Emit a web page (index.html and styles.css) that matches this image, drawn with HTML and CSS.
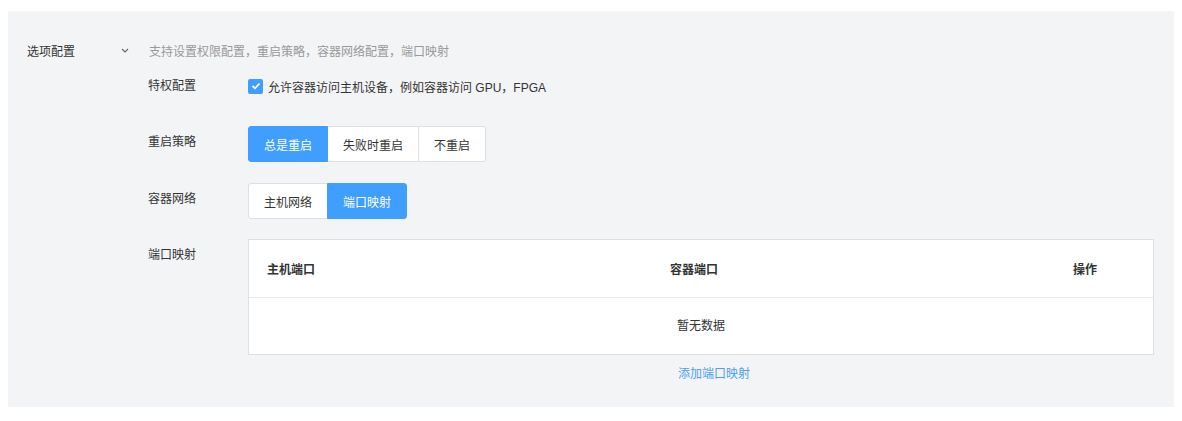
FILE: index.html
```html
<!DOCTYPE html>
<html lang="zh-CN">

    <head>
        <meta charset="UTF-8">
        <meta name="viewport" content="width=device-width, initial-scale=1.0">
        <title>选项配置</title>
        <link rel="stylesheet" href="styles.css">
    </head>

    <body>
        <div class="panel">
            <!-- 标题行 -->
            <div class="section-head">
                <span class="section-title">选项配置</span>
                <svg class="chevron" width="8" height="5" viewBox="0 0 8 5">
                    <path d="M1 1 L4 4 L7 1" fill="none" stroke="#666" stroke-width="1.1"></path>
                </svg>
                <span class="section-desc">支持设置权限配置，重启策略，容器网络配置，端口映射</span>
            </div>

            <div class="rows">
                <div class="row row-privilege">
                    <div class="row-label">特权配置</div>
                    <label class="check">
                        <span class="check-box">
                            <svg width="10" height="8" viewBox="0 0 10 8">
                                <path d="M1.5 4 L4 6.3 L8.5 1.5" fill="none" stroke="#fff" stroke-width="1.8"></path>
                            </svg>
                        </span>
                        <span>允许容器访问主机设备，例如容器访问 GPU，FPGA</span>
                    </label>
                </div>

                <div class="row">
                    <div class="row-label">重启策略</div>
                    <div class="btn-group">
                        <button class="btn active">总是重启</button>
                        <button class="btn">失败时重启</button>
                        <button class="btn">不重启</button>
                    </div>
                </div>

                <div class="row">
                    <div class="row-label">容器网络</div>
                    <div class="btn-group">
                        <button class="btn">主机网络</button>
                        <button class="btn active">端口映射</button>
                    </div>
                </div>

                <div class="row row-ports">
                    <div class="row-label">端口映射</div>
                    <div class="port-box">
                        <div class="port-table">
                            <div class="port-head">
                                <div class="cell">主机端口</div>
                                <div class="cell">容器端口</div>
                                <div class="cell">操作</div>
                            </div>
                            <div class="port-empty">暂无数据</div>
                        </div>
                        <div class="add-link"><a href="#">添加端口映射</a></div>
                    </div>
                </div>
            </div>
        </div>
    </body>

</html>
```

FILE: styles.css
```css
body {
    margin: 11px 8px 0 8px;
    font-family: "Liberation Sans", "Noto Sans CJK SC", sans-serif;
    font-size: 12px;
    color: #333;
    background: #fff;
}

.panel {
    background: #f3f4f6;
    height: 396px;
    padding: 29px 20px 0 19px;
    box-sizing: border-box;
}

.section-head {
    display: flex;
    align-items: center;
    height: 20px;
}

.section-title {
    width: 94px;
    color: #333;
}

.chevron {
    margin-right: 20px;
}

.section-desc {
    color: #999;
}

.rows {
    display: flex;
    flex-direction: column;
    gap: 21px;
    margin-top: 10px;
    padding-left: 121px;
}

.row {
    display: flex;
    align-items: flex-start;
}

.row-privilege {
    margin-bottom: 3px;
}

.row-ports {
    margin-top: -1px;
}

.row-label {
    width: 100px;
    line-height: 32px;
    flex-shrink: 0;
}

.check {
    display: flex;
    align-items: center;
    height: 32px;
    gap: 5px;
    cursor: pointer;
}

.check-box {
    width: 15px;
    height: 15px;
    border-radius: 2px;
    background: #409eff;
    display: flex;
    align-items: center;
    justify-content: center;
}

.btn-group {
    display: flex;
}

.btn {
    height: 36px;
    padding: 0 15px;
    font-family: inherit;
    font-size: 12px;
    color: #333;
    background: #fff;
    border: 1px solid #dcdfe6;
    margin-left: -1px;
    cursor: pointer;
}

.btn:first-child {
    margin-left: 0;
    border-radius: 3px 0 0 3px;
}

.btn:last-child {
    border-radius: 0 3px 3px 0;
}

.btn.active {
    background: #409eff;
    border-color: #409eff;
    color: #fff;
    position: relative;
}

.port-box {
    flex: 1;
}

.port-table {
    background: #fff;
    border: 1px solid #dcdfe6;
}

.port-head {
    display: grid;
    grid-template-columns: 403px 403px 1fr;
    height: 57px;
    align-items: center;
    border-bottom: 1px solid #e4e7ed;
    font-weight: bold;
}

.cell {
    padding-left: 18px;
}

.port-empty {
    height: 56px;
    line-height: 56px;
    text-align: center;
}

.add-link {
    text-align: center;
    padding-left: 26px;
    margin-top: 9px;
}

.add-link a {
    color: #4a9ff5;
    text-decoration: none;
}
```
